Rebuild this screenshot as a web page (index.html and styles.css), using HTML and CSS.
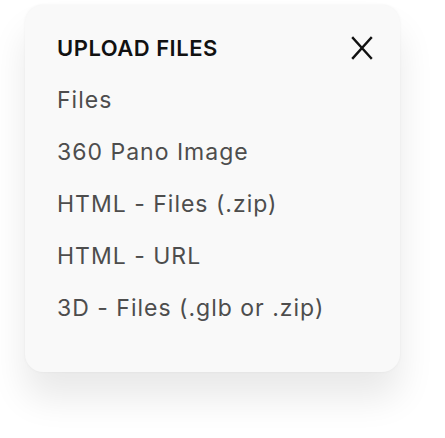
FILE: index.html
```html
<!DOCTYPE html>
<html>
<head>
<meta charset="utf-8">
<link rel="stylesheet" href="styles.css">
</head>
<body>
<div class="card">
  <div class="header">
    <div class="title">UPLOAD FILES</div>
    <button class="close" aria-label="Close">
      <svg width="22" height="24" viewBox="0 0 22 24"><path d="M2 2 L20 22 M20 2 L2 22" stroke="#111" stroke-width="2.4" stroke-linecap="square" fill="none"/></svg>
    </button>
  </div>
  <ul class="list">
    <li>Files</li>
    <li>360 Pano Image</li>
    <li>HTML - Files (.zip)</li>
    <li>HTML - URL</li>
    <li>3D - Files (.glb or .zip)</li>
  </ul>
</div>
</body>
</html>
```
FILE: styles.css
```css
html, body {
  margin: 0;
  background: #ffffff;
}
body {
  box-sizing: border-box;
  min-height: 438px;
  padding: 5px 0 65px 25px;
  font-family: "Inter", "Noto Sans", sans-serif;
}
.card {
  width: 375px;
  box-sizing: border-box;
  padding: 17px 27px 38px 32px;
  background: #f9f9f9;
  border-radius: 18px;
  box-shadow: 0 26px 36px rgba(0, 0, 0, 0.09), 0 0 3px rgba(0, 0, 0, 0.05);
}
.header {
  display: flex;
  align-items: center;
  justify-content: space-between;
  height: 52px;
}
.title {
  font-size: 22px;
  font-weight: 600;
  letter-spacing: 0.5px;
  color: #111111;
  line-height: 52px;
}
.close {
  background: none;
  border: 0;
  padding: 0;
  width: 22px;
  height: 24px;
  display: flex;
}
.list {
  list-style: none;
  margin: 0;
  padding: 0;
}
.list li {
  font-size: 23px;
  letter-spacing: 1px;
  line-height: 52px;
  color: #4d4d4d;
}
```
